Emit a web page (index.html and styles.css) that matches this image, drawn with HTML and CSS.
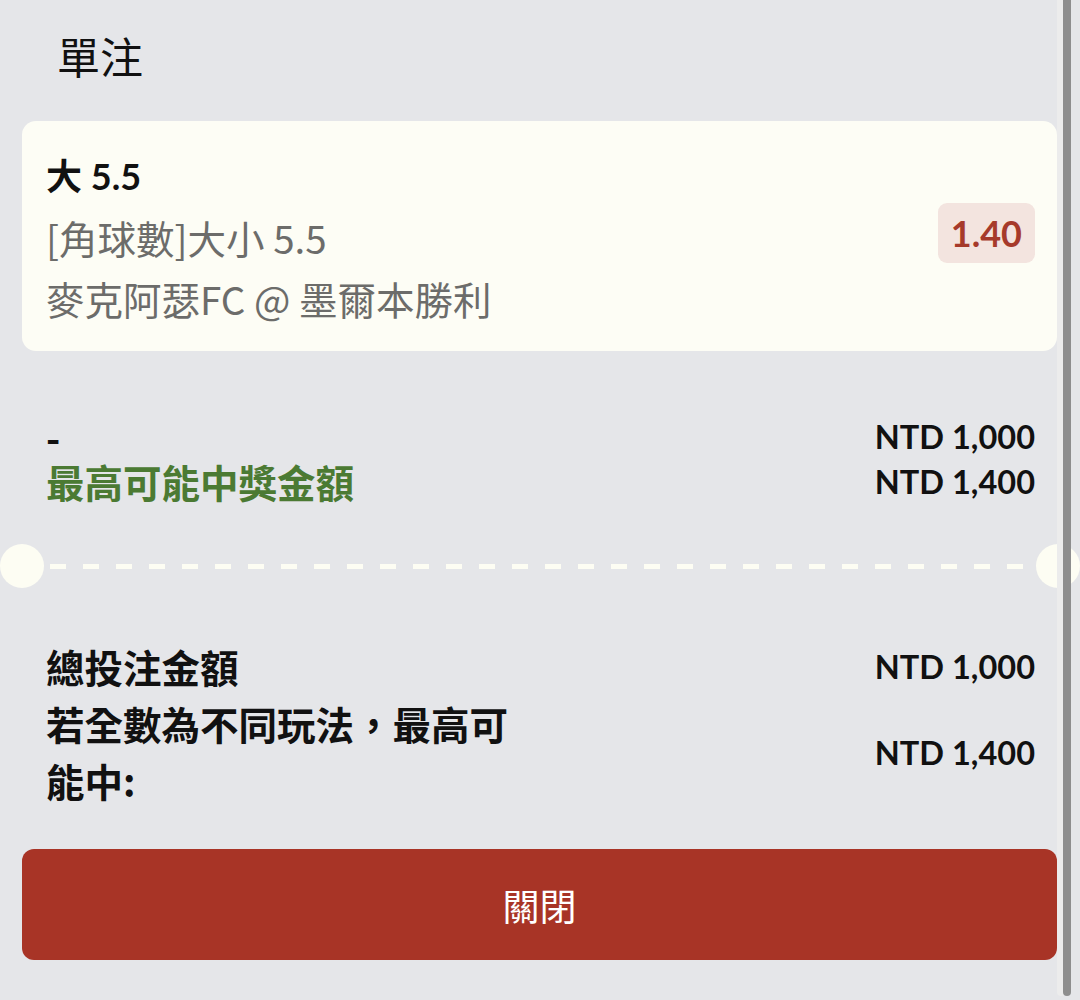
FILE: index.html
```html
<!DOCTYPE html>
<html lang="zh-Hant">
<head>
<meta charset="utf-8">
<title>單注</title>
<link rel="stylesheet" href="styles.css">
</head>
<body>
<div class="page">
  <h1 class="title">單注</h1>

  <div class="card">
    <div class="card-info">
      <div class="pick">大 5.5</div>
      <div class="market">[角球數]大小 5.5</div>
      <div class="match">麥克阿瑟FC @ 墨爾本勝利</div>
    </div>
    <div class="odds">1.40</div>
  </div>

  <div class="summary">
    <div class="row">
      <div class="label">-</div>
      <div class="amount">NTD 1,000</div>
    </div>
    <div class="row">
      <div class="label green">最高可能中獎金額</div>
      <div class="amount">NTD 1,400</div>
    </div>
  </div>

  <div class="separator">
    <span class="notch"></span>
    <span class="dashes"></span>
    <span class="notch"></span>
  </div>

  <div class="totals">
    <div class="row tall">
      <div class="label">總投注金額</div>
      <div class="amount">NTD 1,000</div>
    </div>
    <div class="row tall">
      <div class="label wrap">若全數為不同玩法，最高可能中:</div>
      <div class="amount">NTD 1,400</div>
    </div>
  </div>

  <button class="close-btn">關閉</button>
</div>
<div class="scrollbar"></div>
</body>
</html>
```

FILE: styles.css
```css
html, body {
  margin: 0;
  padding: 0;
}
body {
  width: 1080px;
  height: 1000px;
  overflow: hidden;
  background: #e5e6e9;
  font-family: Lato, "Noto Sans CJK TC", sans-serif;
  color: #111;
  position: relative;
}
.page {
  padding: 27px 23px 0 22px;
}
.title {
  margin: 0 0 38px 35px;
  font-family: "Noto Sans CJK TC", sans-serif;
  font-weight: 400;
  font-size: 43px;
  line-height: 56px;
  color: #111;
}
.card {
  background: #fdfdf5;
  border-radius: 14px;
  padding: 25px 22px 22px 24px;
  display: flex;
  align-items: center;
  justify-content: space-between;
}
.card-info {
  display: flex;
  flex-direction: column;
}
.pick {
  font-size: 36px;
  line-height: 61px;
  font-weight: 700;
  color: #111;
}
.market, .match {
  font-family: "Noto Sans CJK TC", sans-serif;
  font-size: 38.5px;
  line-height: 61px;
  color: #6c6c6a;
}
.odds {
  background: #f3e4df;
  color: #a63a2b;
  font-size: 36px;
  font-weight: 700;
  line-height: 60px;
  padding: 0 13px;
  border-radius: 9px;
  margin-bottom: 10px;
}
.summary {
  margin-top: 63px;
  padding: 0 0 0 24px;
}
.row {
  display: flex;
  justify-content: space-between;
  align-items: center;
  padding-right: 22px;
}
.summary .row {
  height: 45px;
}
.label {
  font-family: "Noto Sans CJK TC", sans-serif;
  font-weight: 700;
  font-size: 38.5px;
  line-height: 45px;
  color: #111;
}
.label.green {
  color: #4b7a33;
}
.amount {
  font-family: Lato, sans-serif;
  font-weight: 700;
  font-size: 32.5px;
  color: #111;
}
.separator {
  margin: 40px -23px 0 -22px;
  height: 44px;
  display: flex;
  align-items: center;
}
.notch {
  width: 44px;
  height: 44px;
  border-radius: 50%;
  background: #fdfdf3;
  flex: none;
}
.dashes {
  flex: 1;
  height: 5px;
  margin: 0 4px 0 6px;
  background-image: repeating-linear-gradient(to right, #fdfdf3 0 16px, transparent 16px 33px);
}
.totals {
  margin-top: 50px;
  padding-left: 24px;
}
.row.tall .label {
  line-height: 57px;
}
.label.wrap {
  max-width: 480px;
}
.close-btn {
  display: block;
  width: 100%;
  height: 111px;
  margin-top: 40px;
  border: none;
  border-radius: 12px;
  background: #a83426;
  color: #fff;
  font-family: "Noto Sans CJK TC", sans-serif;
  font-size: 37px;
  font-weight: 400;
  cursor: pointer;
}
.scrollbar {
  position: absolute;
  top: 0;
  right: 9px;
  width: 8px;
  height: 996px;
  background: #8e8e8e;
  border-radius: 0 0 4px 4px;
  box-shadow: -6px 0 0 #ececec;
}
```
